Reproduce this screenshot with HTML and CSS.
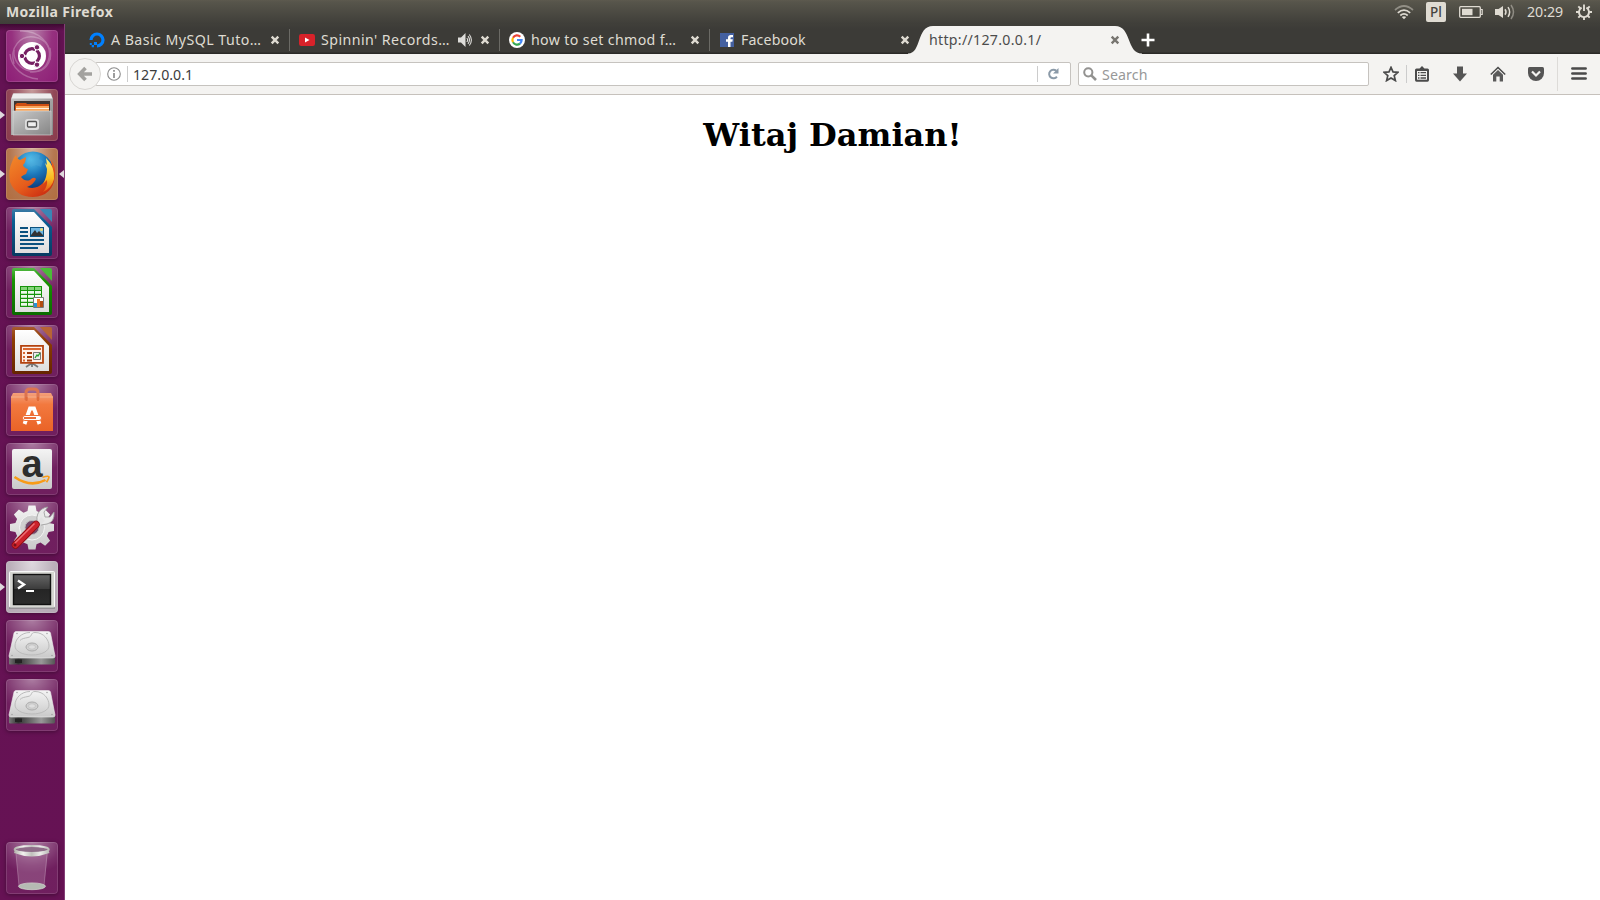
FILE: index.html
```html
<!DOCTYPE html>
<html lang="pl">
<head>
<meta charset="utf-8">
<title>Mozilla Firefox</title>
<link rel="stylesheet" href="styles.css">
</head>
<body>
<svg class="defs" width="0" height="0">
  <defs>
    <linearGradient id="silver" x1="0" y1="0" x2="0" y2="1"><stop offset="0" stop-color="#f4f4f4"/><stop offset="1" stop-color="#c9c9c9"/></linearGradient>
    <linearGradient id="paper" x1="0" y1="0" x2="0" y2="1"><stop offset="0" stop-color="#fff"/><stop offset="1" stop-color="#dedede"/></linearGradient>
    <linearGradient id="metal" x1="0" y1="0" x2="1" y2="1"><stop offset="0" stop-color="#c9c9c9"/><stop offset="1" stop-color="#858585"/></linearGradient>
    <linearGradient id="bluedoc" x1="0" y1="0" x2="0" y2="1"><stop offset="0" stop-color="#3c7ba5"/><stop offset=".25" stop-color="#0a5f94"/><stop offset="1" stop-color="#063a61"/></linearGradient>
    <linearGradient id="greendoc" x1="0" y1="0" x2="0" y2="1"><stop offset="0" stop-color="#53b944"/><stop offset=".25" stop-color="#189502"/><stop offset="1" stop-color="#0b6b00"/></linearGradient>
    <linearGradient id="browndoc" x1="0" y1="0" x2="0" y2="1"><stop offset="0" stop-color="#a85a30"/><stop offset=".25" stop-color="#8f3e04"/><stop offset="1" stop-color="#662500"/></linearGradient>
    <linearGradient id="bag" x1="0" y1="0" x2="0" y2="1"><stop offset="0" stop-color="#f4a07b"/><stop offset=".3" stop-color="#f2793f"/><stop offset="1" stop-color="#ea6327"/></linearGradient>
    <linearGradient id="screen" x1="0" y1="0" x2="0" y2="1"><stop offset="0" stop-color="#666"/><stop offset=".48" stop-color="#3c3c3c"/><stop offset=".5" stop-color="#252525"/><stop offset="1" stop-color="#2c2c2c"/></linearGradient>
    <radialGradient id="globe" cx=".45" cy=".2" r=".75"><stop offset="0" stop-color="#55c4ee"/><stop offset=".5" stop-color="#1b76b9"/><stop offset="1" stop-color="#0b3473"/></radialGradient>
    <linearGradient id="fox" x1="0" y1="0" x2=".8" y2="1"><stop offset="0" stop-color="#f28a2a"/><stop offset=".6" stop-color="#e65c1c"/><stop offset="1" stop-color="#c92a10"/></linearGradient>
    <linearGradient id="flame" x1="0" y1="0" x2="0" y2="1"><stop offset="0" stop-color="#fff27a"/><stop offset=".6" stop-color="#f9b91e"/><stop offset="1" stop-color="#e5541a"/></linearGradient>
    <linearGradient id="diskedge" x1="0" y1="0" x2="1" y2="0"><stop offset="0" stop-color="#777"/><stop offset=".2" stop-color="#333"/><stop offset=".7" stop-color="#999"/><stop offset="1" stop-color="#555"/></linearGradient>
    <linearGradient id="rim" x1="0" y1="0" x2="1" y2="0"><stop offset="0" stop-color="#b4b4ae"/><stop offset=".25" stop-color="#f2f2ef"/><stop offset=".5" stop-color="#c0c0bc"/><stop offset=".75" stop-color="#ececea"/><stop offset="1" stop-color="#bcbcb8"/></linearGradient>
    <symbol id="disk" viewBox="0 0 52 52">
      <path d="M3 37v6.500q0 1 1 1h43q2 0 2-1.500V36z" fill="url(#diskedge)"/>
      <path d="M10 11.500h32.500q1.500 0 2 1.500l4.500 23q0 2-2 2H5q-2 0-2-2L8 13q.500-1.500 2-1.500z" fill="url(#silver)" stroke="#eee" stroke-width=".6"/>
      <path d="M24 12.500c-9 0-15 7-15 13.500 0 5 7 9 17 9s17-4 17-9c0-6-5-13.500-14-13.500-5 0-2 4-7 5-4 .8-6 1-8 3" fill="none" stroke="#bbb"/>
      <ellipse cx="26" cy="27" rx="6" ry="4" fill="#d0d0d0" stroke="#aaa"/><ellipse cx="26" cy="27" rx="3.500" ry="2.200" fill="#dedede" stroke="#b8b8b8" stroke-width=".6"/>
      <path d="M9 39.500h7v3.500H9z" fill="#222"/>
      <g fill="#999"><circle cx="11" cy="13.500" r=".7"/><circle cx="41" cy="13.500" r=".7"/><circle cx="6" cy="35.500" r=".7"/><circle cx="46" cy="35.500" r=".7"/></g>
    </symbol>
    <symbol id="close" viewBox="0 0 10 10"><path d="M1.700 1.700l6.600 6.600M8.300 1.700l-6.600 6.600" stroke="currentColor" stroke-width="2.400"/></symbol>
  </defs>
</svg>

<header class="panel">
  <span class="panel-title">Mozilla Firefox</span>
  <div class="indicators">
    <svg class="wifi" viewBox="0 0 20 16"><g fill="none" stroke="#dfdbd2" stroke-width="1.700"><path d="M1 6q9-8 18 0" opacity=".45"/><path d="M3.800 8.800q6.200-5.400 12.400 0"/><path d="M6.300 11.500q3.700-3.200 7.400 0"/></g><path d="M7.800 13q2.200-1.600 4.400 0L10 15.300z" fill="#dfdbd2"/></svg>
    <span class="kbd">Pl</span>
    <svg class="battery" viewBox="0 0 24 12"><rect x=".7" y=".7" width="20.600" height="10.600" rx="1" fill="none" stroke="#dfdbd2" stroke-width="1.300"/><path d="M3 2.800h10.500v6.400H3z" fill="#dfdbd2"/><path d="M22 3.500h1.200v5H22" fill="none" stroke="#dfdbd2" stroke-width="1.200"/></svg>
    <svg class="volume" viewBox="0 0 20 16"><path d="M0 5h3.500L8 2v12l-4.500-3H0z" fill="#dfdbd2"/><g fill="none" stroke="#dfdbd2" stroke-width="1.500"><path d="M10 5.200q2 2.800 0 5.600"/><path d="M13 3.200q3.300 4.800 0 9.600"/><path d="M16 1q5 7 0 14" opacity=".45"/></g></svg>
    <span class="clock">20:29</span>
    <svg class="gear" viewBox="0 0 16 16"><path d="M5.600 3.700a5 5 0 1 0 4.800 0" fill="none" stroke="#dfdbd2" stroke-width="1.900"/><path d="M8 .5V7M2.300 2.300l2.200 2.200M13.700 2.300l-2.200 2.200M0 8h3M13 8h3M2.300 13.700l2.200-2.200M13.700 13.700l-2.200-2.200M8 13v3" stroke="#dfdbd2" stroke-width="1.900"/></svg>
  </div>
</header>

<div class="desktop">
  <nav class="launcher">
    <div class="tile dash"><svg viewBox="0 0 52 52">
      <g fill="none" stroke="#fff" opacity=".25" stroke-width="1.400"><path d="M8 34C3 17 15 5 28 7s18 12 16 23"/><path d="M14 1c18-1 32 12 29 27-2 10-10 15-19 14"/><path d="M44 18c3 15-6 26-20 23C14 39 7 30 8 20"/><path d="M4 24c1 14 14 24 28 25"/></g>
      <circle cx="26" cy="26" r="14" fill="#fff"/>
      <circle cx="26" cy="26" r="7.300" fill="none" stroke="#762063" stroke-width="3.400"/>
      <g stroke="#fff" stroke-width="1.300"><path d="M26 26H15M26 26l6-9.500M26 26l6 9.500"/></g><circle cx="26" cy="26" r="5.600" fill="#fff"/>
      <g fill="#762063" stroke="#fff"><circle cx="16" cy="26" r="2.700"/><circle cx="31" cy="17.300" r="2.700"/><circle cx="31" cy="34.700" r="2.700"/></g></svg></div>
    <div class="tile files running"><svg viewBox="0 0 52 52">
      <path d="M5 10l2-5.500h38L47 10v36H5z" fill="url(#metal)"/><path d="M5.500 9.500l2-5h37l2 5z" fill="#eee"/>
      <path d="M8 12h36v11H8z" fill="#3c3532"/><path d="M9 16l2-2h9l1 1h22v8H9z" fill="#cf4f12"/><path d="M10 17h33v5H10z" fill="#f9a75d"/><path d="M10 19h33v1H10z" fill="#fff0df"/>
      <path d="M7 22h38v24H7z" fill="url(#metal)" stroke="#ddd" stroke-width=".6"/><rect x="19" y="30" width="14" height="11" rx="2.500" fill="#ddd"/><rect x="21.500" y="32.500" width="9" height="5.500" rx="1" fill="#eee" stroke="#555" stroke-width="1.300"/></svg></div>
    <div class="tile firefox running focused"><svg viewBox="0 0 52 52">
      <circle cx="27" cy="24" r="20.500" fill="url(#globe)"/>
      <path d="M25 9l5-3 4 1-1 4 4 2-2 6-5-2-5 2-3-5z" fill="#51a7d6" opacity=".4"/>
      <path d="M6 14q1-4 4-7 1 4 4 5l6-3q0 5-3 8 1 3 5 4l-2 5q-3 1-5 3 4 5 9 3 4-4 6-1-2 5-9 8 9 3 16-4 5-5 6-13l1-7 2 3-1-6q5 6 4 16-2 20-22 21Q10 49 4 34 2 22 6 14z" fill="url(#fox)"/>
      <path d="M40 10q9 9 8 21-2 9-11 13 5-6 4-12l-4 4q4-7 4-15l-2-6 2 2z" fill="url(#flame)"/></svg></div>
    <div class="tile"><svg viewBox="0 0 52 52">
      <path d="M8 2h20l18 18v27q0 2-2 2H8q-2 0-2-2V4q0-2 2-2z" fill="url(#bluedoc)"/><path d="M34 2h10q2 0 2 2v11z" fill="#3a86b5"/><path d="M9 5h19l15 16v25H9z" fill="url(#paper)"/>
      <g fill="#0c527f"><path d="M14 20h8v2h-8zM14 24h8v2h-8zM14 28h8v2h-8zM14 32h24v2H14zM14 36h24v2H14zM14 40h18v2H14z"/><path d="M24 20h14v10H24z"/></g><path d="M25 21h12v8H25z" fill="#71b7e1"/><path d="M25 28l4-5 2 3 2-2 4 4v1H25z" fill="#333"/><circle cx="35.500" cy="22.500" r="1.500" fill="#eedc74"/></svg></div>
    <div class="tile"><svg viewBox="0 0 52 52">
      <path d="M8 2h20l18 18v27q0 2-2 2H8q-2 0-2-2V4q0-2 2-2z" fill="url(#greendoc)"/><path d="M34 2h10q2 0 2 2v11z" fill="#4bbb38"/><path d="M9 5h19l15 16v25H9z" fill="url(#paper)"/>
      <path d="M14 20h22v21H14z" fill="#16940b"/><g fill="#edf8ec"><path d="M15 25h6v2.800h-6zM22 25h6v2.800h-6zM29 25h6v2.800h-6zM15 29h6v2.800h-6zM22 29h6v2.800h-6zM29 29h6v2.800h-6zM15 33h6v2.800h-6zM22 33h6v2.800h-6zM15 37h6v2.800h-6zM22 37h6v2.800h-6z"/></g><path d="M15 21h6v3h-6zM22 21h6v3h-6zM29 21h6v3h-6z" fill="#85d47a"/>
      <path d="M27.500 31.500h10v10h-10z" fill="#fff" stroke="#777"/><path d="M28 37h3v4h-3z" fill="#2a95d5"/><path d="M31 33h3v8h-3z" fill="#f27b24"/><path d="M34 35h3v6h-3z" fill="#b24b10"/></svg></div>
    <div class="tile"><svg viewBox="0 0 52 52">
      <path d="M8 2h20l18 18v27q0 2-2 2H8q-2 0-2-2V4q0-2 2-2z" fill="url(#browndoc)"/><path d="M34 2h10q2 0 2 2v11z" fill="#b76435"/><path d="M9 5h19l15 16v25H9z" fill="url(#paper)"/>
      <path d="M26 38v4M26 38l-6 4M26 38l6 4" stroke="#777" stroke-width="1.800"/><path d="M15 20.800h22v17H15z" fill="#fff0e8" stroke="#b3420e" stroke-width="1.800"/><path d="M17 23h18v2H17z" fill="#da6730"/><path d="M17 27h2v2h-2zM17 31h2v2h-2zM17 34.500h2v2h-2z" fill="#da6730"/><path d="M21 27h5v2h-5zM21 31h5v2h-5zM21 34.500h5v2h-5z" fill="#a33b0c"/><path d="M27.500 27.500h7v7h-7z" fill="#eee" stroke="#777"/><path d="M29 33l2-3 1 1 2-3" fill="none" stroke="#22a02d" stroke-width="1.300"/></svg></div>
    <div class="tile"><svg viewBox="0 0 52 52">
      <path d="M5 13l2-4h38l2 4v34H5z" fill="url(#bag)"/><path d="M5 13h42" stroke="#f6b28c"/><path d="M20 16V9q0-4 4-4h4q4 0 4 4v7" fill="none" stroke="#dc7450" stroke-width="3"/><path d="M19.500 15h2M31 15h2" stroke="#df6b39" stroke-width="4"/>
      <path d="M18.500 40l5.500-15.500h4L33.500 40" fill="none" stroke="#fff" stroke-width="3.800"/><rect x="16.500" y="31.500" width="19" height="5" rx="2.500" fill="#fff" stroke="#ee6d34"/><path d="M18 34h12" stroke="#e95e25" stroke-width="1.800"/></svg></div>
    <div class="tile"><svg viewBox="0 0 52 52"><rect x="6" y="6" width="40" height="40" rx="2" fill="url(#silver)"/><text x="26" y="34" text-anchor="middle" class="amazon-letter">a</text><path d="M8.500 34q16 11 31 3" fill="none" stroke="#f79b18" stroke-width="2.500"/><path d="M36.500 34.300q7-2 6.500 0t-2.500 5" fill="none" stroke="#f79b18" stroke-width="1.600"/></svg></div>
    <div class="tile"><svg viewBox="0 0 52 52">
      <path d="M22.500 3.500h7l1 5.500 4 1.700 4.600-3.200 5 5-3.200 4.600 1.700 4 5.400 1v7l-5.400 1-1.700 4 3.200 4.600-5 5-4.600-3.200-4 1.700-1 5.300h-7l-1-5.300-4-1.700-4.600 3.200-5-5 3.200-4.600-1.700-4-5.400-1v-7l5.400-1 1.700-4-3.200-4.600 5-5 4.600 3.200 4-1.700z" fill="url(#silver)"/><circle cx="26" cy="25.500" r="12.500" fill="#d0d0d0" stroke="#f4f4f4"/><circle cx="26" cy="25.500" r="7" fill="#74476b" stroke="#bbb"/>
      <path d="M31 19q-1-8 5-12 3-2 6-2l-4 5 1 5 5 0 4-5q1 10-7 12l-6 1z" fill="#e8e8e8" stroke="#999" stroke-width=".8"/><path d="M37 17L27 27" stroke="#e2e2e2" stroke-width="5"/><path d="M30 22.500L9.500 43" stroke="#8c0d14" stroke-width="7.500" stroke-linecap="round"/><path d="M30 22.500L9.500 43" stroke="#cc222b" stroke-width="6" stroke-linecap="round"/><path d="M28.500 21.500L9 41" stroke="#ed7076" stroke-width="1.400"/><circle cx="9" cy="43" r="1.500" fill="#781019"/></svg></div>
    <div class="tile terminal running"><svg viewBox="0 0 52 52"><rect x="3.500" y="10.500" width="45" height="36" rx="1" fill="#d6d6d2" stroke="#f8f8f8"/><path d="M3 47h46" stroke="#777"/><rect x="7.500" y="13.500" width="37" height="30" fill="url(#screen)" stroke="#111" stroke-width="1.400"/><path d="M12 19.500l6 4-6 4" fill="none" stroke="#fff" stroke-width="2.400"/><path d="M20 30h8" stroke="#fff" stroke-width="2"/></svg></div>
    <div class="tile"><svg><use href="#disk"/></svg></div>
    <div class="tile"><svg><use href="#disk"/></svg></div>
    <div class="tile trash"><svg viewBox="0 0 52 52"><path d="M9.500 10l3.500 34h25l4-34z" fill="#d4b4cd" opacity=".25"/><path d="M10 12l3 32M41 12l-3 32" stroke="#c9a4c0" opacity=".4"/><ellipse cx="26" cy="44.300" rx="13.500" ry="3.400" fill="#b5bab3" stroke="#d5d8d3" stroke-width=".7"/><ellipse cx="25.700" cy="7.500" rx="17" ry="3.600" fill="#8f6d89" stroke="url(#rim)" stroke-width="2"/><path d="M8.500 9.500q17.200 6.500 34.400 0" fill="none" stroke="url(#rim)" stroke-width="3.400"/></svg></div>
  </nav>

  <main class="browser">
    <div class="tabs">
      <div class="tab"><svg class="favicon" viewBox="0 0 16 16"><path d="M2 8a6 6 0 1 1 6 6" fill="none" stroke="#0080ff" stroke-width="3.200"/><path d="M5 10h3v3H5zM2.700 13H5v2.300H2.700zM.8 11h2v2h-2z" fill="#0080ff"/></svg><span class="label t-mysql">A Basic MySQL Tuto…</span><svg class="close"><use href="#close"/></svg></div>
      <div class="tab"><svg class="favicon" viewBox="0 0 16 16"><rect y="2" width="16" height="12" rx="2.200" fill="#d8222a"/><path d="M6 5.500v5L10.500 8z" fill="#fff"/></svg><span class="label t-spin">Spinnin' Records…</span><svg class="sound" viewBox="0 0 16 16"><path d="M1 5.500h3L8.500 1v14L4 10.500H1z" fill="#deddda"/><g fill="none" stroke="#deddda" stroke-width="1.100"><path d="M9.800 6q1.700 2 0 4M11 4.200q3 3.800 0 7.600M12.300 2.500q4.200 5.500 0 11"/></g></svg><svg class="close"><use href="#close"/></svg></div>
      <div class="tab"><svg class="favicon" viewBox="0 0 16 16"><circle cx="8" cy="8" r="8" fill="#fff"/><g fill="none" stroke-width="2.200"><path d="M4 5.700A4.700 4.700 0 0 1 11.300 4.700" stroke="#ea4335"/><path d="M4 5.700a4.800 4.800 0 0 0 0 4.600" stroke="#fbbc05"/><path d="M4 10.300a4.700 4.700 0 0 0 7 1.300" stroke="#34a853"/><path d="M11 11.600A4.700 4.700 0 0 0 12.600 8H8" stroke="#4285f4"/></g></svg><span class="label t-chmod">how to set chmod f…</span><svg class="close"><use href="#close"/></svg></div>
      <div class="tab last"><svg class="favicon" viewBox="0 0 16 16"><path d="M1 1h14v14H1z" fill="#4460a0"/><path d="M9 15V9.700H7V7.300h2V5.800Q9 3 11.700 3H14v2.300h-1.500q-1 0-1 1v1h2.300l-.4 2.400h-1.900V15z" fill="#fff"/></svg><span class="label t-face">Facebook</span><svg class="close"><use href="#close"/></svg></div>
      <div class="tab active"><svg class="tab-shape" viewBox="0 0 236 30"><path d="M0 29.500C14 29.500 8 2 25 2H207C224 2 218 29.500 234 29.500V30H0z" fill="#f4f3f1"/></svg><span class="label t-local">http://127.0.0.1/</span><svg class="close"><use href="#close"/></svg></div>
      <svg class="newtab" viewBox="0 0 14 14"><path d="M7 .5v13M.5 7h13" stroke="#fff" stroke-width="2.600"/></svg>
    </div>

    <div class="toolbar">
      <div class="back"><svg viewBox="0 0 16 16"><path d="M8.500 2L2.700 8l5.800 6M3 8h12" fill="none" stroke="#a3a29f" stroke-width="3.600"/></svg></div>
      <div class="urlbar">
        <svg class="info" viewBox="0 0 14 14"><circle cx="7" cy="7" r="6.300" fill="none" stroke="#8c8c8c" stroke-width="1.100"/><path d="M7 6v5M7 3v1.800" stroke="#8c8c8c" stroke-width="1.700"/></svg>
        <span class="divider"></span><span class="address">127.0.0.1</span><span class="divider reload-divider"></span>
        <svg class="reload" viewBox="0 0 12 12"><path d="M9.300 2.800A4.300 4.300 0 1 0 9.900 8.600" fill="none" stroke="#8b9aa8" stroke-width="2"/><path d="M11.500 0v5.500H6z" fill="#8b9aa8"/></svg>
      </div>
      <div class="searchbar"><svg viewBox="0 0 14 14"><circle cx="5.300" cy="5.300" r="4.100" fill="none" stroke="#939290" stroke-width="2"/><path d="M8.300 8.300l4.700 4.700" stroke="#939290" stroke-width="2.600"/></svg><span class="search-text">Search</span></div>
      <svg class="tool star" viewBox="0 0 16 16"><path d="M8 1.400l2 4.500 5 .4-3.800 3.300 1.200 5L8 12l-4.400 2.600 1.200-5L1 6.300l5-.4z" fill="none" stroke="#4b4b4b" stroke-width="1.700"/></svg>
      <span class="divider tool-divider"></span>
      <svg class="tool clip" viewBox="0 0 16 16"><path d="M2.500 2.500h3L8 0l2.500 2.500h3q1.500 0 1.500 1.500v10q0 1.700-1.500 1.700h-11Q1 15.700 1 14V4q0-1.500 1.500-1.500z" fill="#4b4b4b"/><path d="M3 5h10v8.700H3z" fill="#f4f3f1"/><path d="M4 6.600h1.500M6.500 6.600H12M4 9.300h1.500M6.500 9.300H12M4 12h1.500M6.500 12H12" stroke="#4b4b4b" stroke-width="1.300"/></svg>
      <svg class="tool down" viewBox="0 0 16 16"><path d="M5 .5h6v7h4l-7 8-7-8h4z" fill="#555"/></svg>
      <svg class="tool home" viewBox="0 0 16 16"><path d="M.8 8.500L8 1.500l7.200 7" fill="none" stroke="#4b4b4b" stroke-width="1.600"/><path d="M3 8.800l5-4.900 5 4.900V15.500H9.700v-5H6.300v5H3z" fill="#5a5a5a"/></svg>
      <svg class="tool pocket" viewBox="0 0 16 16"><path d="M1.500 1h13Q16 1 16 2.500V7a8 8 0 0 1-16 0V2.500Q0 1 1.500 1z" fill="#555"/><path d="M4 5.500l4 4 4-4" fill="none" stroke="#f4f3f1" stroke-width="2.200"/></svg>
      <span class="divider menu-divider"></span>
      <svg class="tool menu" viewBox="0 0 16 16"><path d="M1.400 2.500h13.200M1.400 7.500h13.200M1.400 12.500h13.200" stroke="#4a4a4a" stroke-width="2.700" stroke-linecap="round"/></svg>
    </div>

    <article class="page"><h1>Witaj Damian!</h1></article>
  </main>
</div>
</body>
</html>
```
FILE: styles.css
```css
* { box-sizing: border-box; }
body { margin: 0; width: 1600px; height: 900px; overflow: hidden; background: #fff; font: 14.2px/20px "Noto Sans", "Open Sans", sans-serif; }
svg { display: block; flex: none; }
.defs { position: absolute; }

.panel { height: 24px; display: flex; justify-content: space-between; align-items: center; padding: 0 8px 0 6px; color: #dfdbd2; background: linear-gradient(#5d5a4e 0, #57554b 2px, #3f3e39); }
.panel-title { font-weight: 700; font-size: 14px; letter-spacing: .38px; white-space: nowrap; }
.indicators { display: flex; align-items: center; }
.wifi { width: 20px; height: 16px; }
.kbd { width: 20px; height: 20px; margin-left: 12px; border-radius: 2px; background: #dfdbd2; color: #45443e; text-align: center; font-size: 13.5px; font-weight: 500; line-height: 20px; }
.battery { width: 24px; height: 12px; margin-left: 13px; }
.volume { width: 20px; height: 16px; margin-left: 12px; }
.clock { width: 36px; margin-left: 12px; font-size: 14.2px; letter-spacing: -.05px; white-space: nowrap; }
.gear { width: 16px; height: 16px; margin-left: 13px; }

.desktop { display: flex; height: 876px; }
.launcher { width: 65px; flex: none; display: flex; flex-direction: column; gap: 7px; padding: 6px 0 6px 6px; border-right: 1px solid #833e76; background: linear-gradient(#3e0932 0, #641253 7px, #661254 100%); }
.tile { position: relative; width: 52px; height: 52px; flex: none; border-radius: 4px; background: radial-gradient(ellipse 75% 60% at 50% 0, rgba(255,255,255,.45), rgba(255,255,255,.12) 75%, rgba(255,255,255,.05)), #681356; box-shadow: inset 0 0 0 1px rgba(255,255,255,.13), 0 1px 4px rgba(0,0,0,.35); }
.tile svg { width: 52px; height: 52px; }
.dash { background: radial-gradient(ellipse at 50% 0, #b984ac, #96317f 55%, #8d1c76); }
.files { background: radial-gradient(ellipse at 50% 0, #c69c9b, #914757 60%, #893b4c); }
.firefox { background: radial-gradient(ellipse at 50% 0, #d5b199, #b57750 60%, #b16d3f); }
.terminal { background: radial-gradient(ellipse at 50% 0, #dfd9df, #bbb0ba 60%, #b5a9b4); }
.trash { margin-top: auto; }
.running::before, .focused::after { content: ""; position: absolute; top: 22px; border: 4px solid transparent; }
.running::before { left: -6px; border-left: 5px solid #dfd9dd; border-right: 0; }
.focused::after { right: -6px; border-right: 5px solid #dfd9dd; border-left: 0; }
.amazon-letter { font: 700 38px/1 "Liberation Sans", sans-serif; fill: #2d2d2d; }

.browser { flex: 1; min-width: 0; }
.tabs { height: 30px; display: flex; padding-left: 15px; background: linear-gradient(#403f3a, #3c3b37 5px, #3c3b37 28px, #2b2a27 29px, #2b2a27 29.5px, #f4f3f1 30px); }
.tab { position: relative; width: 210px; display: flex; align-items: center; padding: 1px 10px 0 9px; color: #dfdbd2; }
.tab:not(.last):not(.active)::after { content: ""; position: absolute; right: 0; top: 5px; width: 1px; height: 22px; background: #6b6a65; }
.favicon { width: 16px; height: 16px; margin-right: 6px; }
.label { flex: 1; white-space: nowrap; position: relative; }
.t-mysql { letter-spacing: .45px; }
.t-spin { letter-spacing: .44px; }
.t-chmod { letter-spacing: .35px; }
.t-face { letter-spacing: .15px; }
.t-local { letter-spacing: .28px; }
.close { position: relative; width: 10px; height: 10px; }
.sound { width: 16px; height: 16px; margin-right: 7px; }
.active { color: #4c4c4c; }
.active .close { color: #777570; }
.tab-shape { position: absolute; left: -12px; top: 0; width: 236px; height: 30px; }
.newtab { width: 14px; height: 14px; margin: 9px 0 0 11px; }

.toolbar { height: 41px; display: flex; align-items: center; padding: 0 12px 0 4px; background: #f4f3f1; border-bottom: 1px solid #c6c1bc; }
.back { position: relative; z-index: 1; width: 32px; height: 32px; flex: none; border: 1px solid #d8d6d3; border-radius: 50%; background: #f4f3f1; display: grid; place-items: center; }
.back svg { width: 16px; height: 16px; }
.urlbar { width: 976px; height: 24px; margin-left: -6px; display: flex; align-items: center; border: 1px solid #c6c3bf; border-radius: 2px; background: #fff; color: #3c3c3c; padding: 0 11px 0 11px; }
.info { width: 14px; height: 14px; }
.divider { width: 1px; height: 16px; background: #ccc; margin-left: 6px; flex: none; }
.address { margin-left: 5px; padding-top: 1px; flex: 1; }
.reload-divider { margin: 0 9px 0 0; }
.reload { width: 12px; height: 12px; }
.searchbar { width: 291px; height: 24px; margin-left: 7px; border: 1px solid #c6c3bf; border-radius: 2px; background: #fff; display: flex; align-items: center; padding-left: 4px; color: #989898; }
.searchbar svg { width: 14px; height: 14px; }
.search-text { margin-left: 5px; padding-top: 1px; letter-spacing: .1px; }
.tool { width: 16px; height: 16px; }
.star { margin-left: 14px; }
.tool-divider { margin-left: 7px; height: 18px; }
.clip { margin-left: 7px; }
.down, .home, .pocket { margin-left: 22px; }
.menu-divider { margin-left: 13px; height: 34px; background: #dddbd8; }
.menu { margin-left: 13px; }
.page { display: flow-root; text-align: center; }
.page h1 { margin: 21px 0; font: 700 32px/38px "DejaVu Serif", serif; color: #000; }
```
